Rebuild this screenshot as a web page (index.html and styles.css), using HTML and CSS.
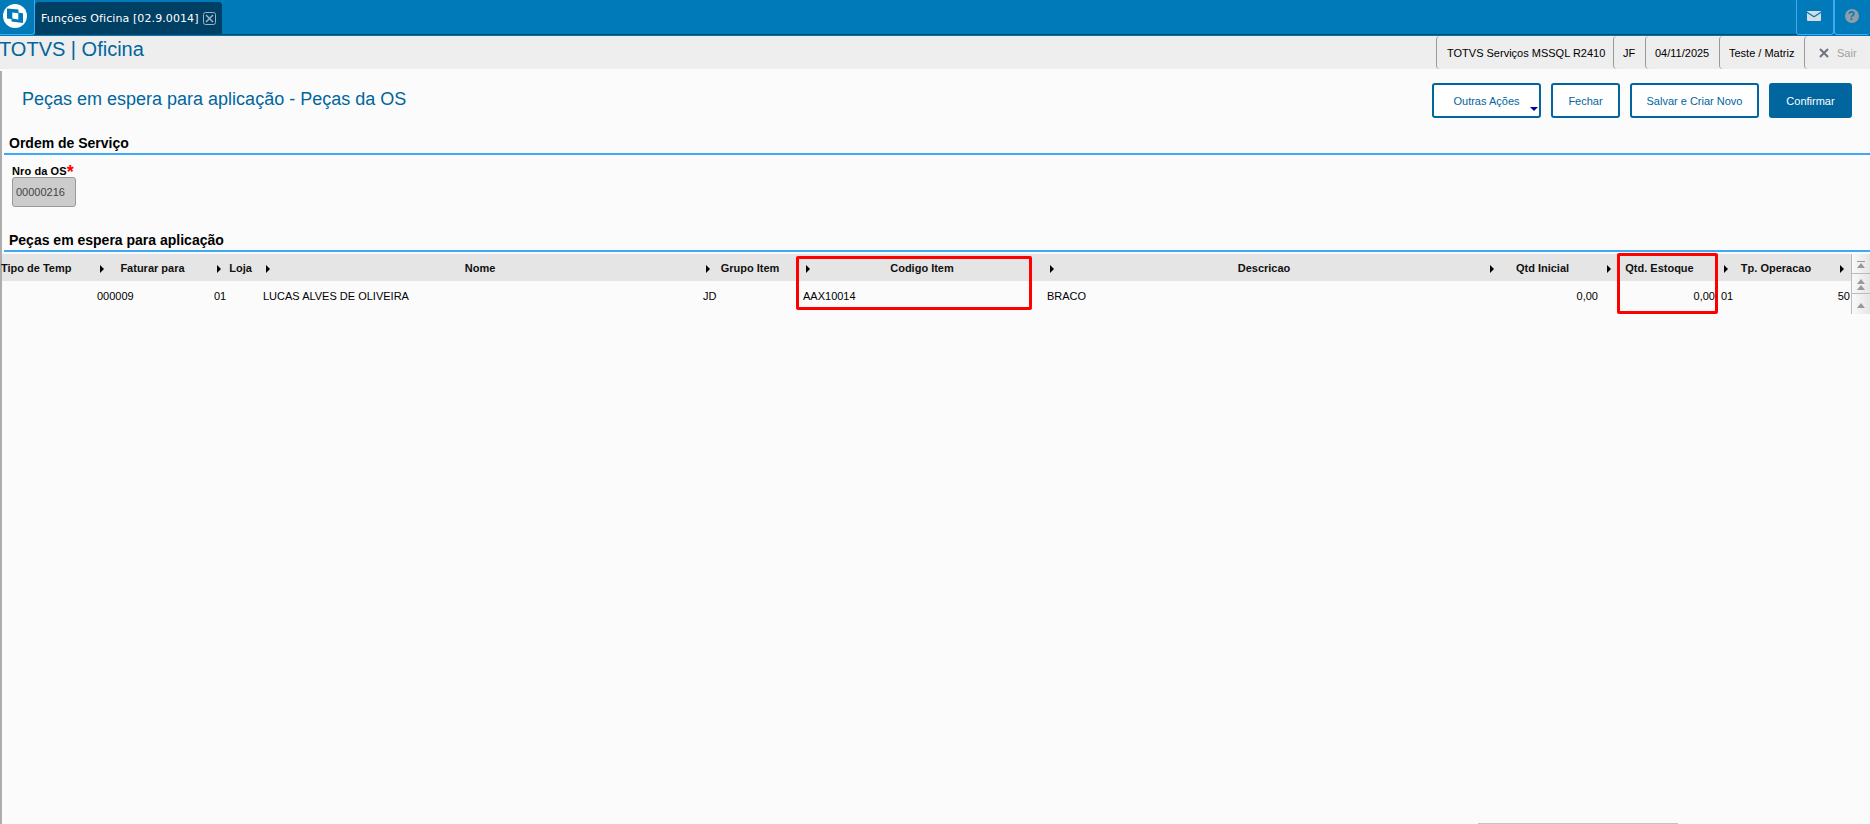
FILE: index.html
```html
<!DOCTYPE html>
<html lang="pt-BR">
<head>
  <meta charset="UTF-8">
  <meta name="viewport" content="width=device-width, initial-scale=1.0">
  <title>TOTVS | Oficina</title>
  <link rel="stylesheet" href="styles.css">
</head>
<body>
  <header class="topbar">
    <div class="logo">
      <svg width="24" height="24" viewBox="0 0 24 24">
        <circle cx="12" cy="12" r="12" fill="#fff"/>
        <path d="M4 4.600L15.500 5.600V16L4 14.500z" fill="#007ab8"/>
        <path d="M8.500 7.800L20 9.200V19L8.500 17.500z" fill="#007ab8"/>
        <path d="M9.300 8.600L15.300 9.300V15.400L9.300 14.600z" fill="#fff"/>
      </svg>
    </div>
    <div class="tab">
      <span class="tab-title">Funções Oficina [02.9.0014]</span>
      <svg width="13" height="13" viewBox="0 0 13 13" fill="none" stroke="#9bb3c2">
        <rect x=".5" y=".5" width="12" height="12" rx="2"/>
        <path d="M3 3l7 7M10 3l-7 7" stroke-width="1.500"/>
      </svg>
    </div>
    <div class="top-icons">
      <div class="top-icon mail">
        <svg width="14" height="10" viewBox="0 0 14 10">
          <rect width="14" height="10" rx="1" fill="#d3dde3"/>
          <path d="M0 1.200l7 4.600 7-4.600" fill="none" stroke="#007ab8" stroke-width="1.200"/>
        </svg>
      </div>
      <div class="top-icon help"><span>?</span></div>
    </div>
  </header>

  <div class="subbar">
    <div class="app-name">TOTVS | Oficina</div>
    <div class="info">
      <div class="info-item env">TOTVS Serviços MSSQL R2410</div>
      <div class="info-item module">JF</div>
      <div class="info-item date">04/11/2025</div>
      <div class="info-item branch">Teste / Matriz</div>
      <div class="info-item exit">
        <svg width="10" height="10" viewBox="0 0 10 10"><path d="M1 1l8 8M9 1l-8 8" stroke="#6b7280" stroke-width="2"/></svg>
        <span>Sair</span>
      </div>
    </div>
  </div>

  <main class="content">
    <div class="page-head">
      <h1>Peças em espera para aplicação - Peças da OS</h1>
      <div class="actions">
        <button class="btn more">Outras Ações</button>
        <button class="btn close">Fechar</button>
        <button class="btn save">Salvar e Criar Novo</button>
        <button class="btn confirm">Confirmar</button>
      </div>
    </div>

    <h2>Ordem de Serviço</h2>
    <div class="field">
      <label for="os">Nro da OS<span class="required">*</span></label>
      <input type="text" id="os" value="00000216" disabled>
    </div>

    <h2 class="items-title">Peças em espera para aplicação</h2>
    <div class="grid">
      <div class="grid-table">
        <div class="row head">
          <div class="first"><span>Tipo de Temp</span></div>
          <div><span>Faturar para</span></div>
          <div class="store"><span>Loja</span></div>
          <div><span>Nome</span></div>
          <div><span>Grupo Item</span></div>
          <div><span>Codigo Item</span></div>
          <div><span>Descricao</span></div>
          <div><span>Qtd Inicial</span></div>
          <div><span>Qtd. Estoque</span></div>
          <div><span>Tp. Operacao</span></div>
          <div></div>
        </div>
        <div class="row">
          <div></div>
          <div>000009</div>
          <div>01</div>
          <div>LUCAS ALVES DE OLIVEIRA</div>
          <div>JD</div>
          <div>AAX10014</div>
          <div>BRACO</div>
          <div class="num">0,00</div>
          <div class="num">0,00</div>
          <div>01</div>
          <div class="num last">50</div>
        </div>
        <div class="mark mark-code"></div>
        <div class="mark mark-stock"></div>
      </div>
      <div class="scroller">
        <div class="scroll-btn"><svg width="8" height="7" viewBox="0 0 8 7"><path d="M0 0h8v1H0zM4 2l4 5H0z"/></svg></div>
        <div class="scroll-btn"><svg width="8" height="11" viewBox="0 0 8 11"><path d="M4 0l4 5H0zM4 6l4 5H0z"/></svg></div>
        <div class="scroll-btn"><svg width="8" height="5" viewBox="0 0 8 5"><path d="M4 0l4 5H0z"/></svg></div>
      </div>
    </div>
    <div class="bottom-panel"></div>
  </main>
</body>
</html>
```
FILE: styles.css
```css
* {
  box-sizing: border-box;
}
body {
  margin: 0;
  height: 824px;
  display: flex;
  flex-direction: column;
  overflow: hidden;
  background-color: #fbfbfb;
  color: #000;
  font-family: "Liberation Sans", Arial, sans-serif;
  font-size: 11px;
}
svg {
  display: block;
  flex: none;
}
.topbar {
  display: flex;
  height: 36px;
  flex: none;
  background: linear-gradient(#007ab8 34px, #004466 34px, #004466 35px, #0078b5 35px);
}
.logo {
  width: 35px;
  height: 35px;
  padding: 4px 0 0 3px;
  border: solid #3fa9f5;
  border-width: 0 1px 1px 0;
  border-radius: 0 0 3px 0;
  background-color: #007ab8;
}
.tab {
  display: flex;
  align-items: center;
  justify-content: space-between;
  width: 187px;
  height: 32px;
  margin-top: 2px;
  padding: 0 6px;
  background-color: #004064;
  border-radius: 4px 4px 0 0;
  color: #fff;
  font-family: "DejaVu Sans", Verdana, sans-serif;
  white-space: nowrap;
}
.tab-title {
  padding-top: 1px;
  font-size: 11px;
  letter-spacing: 0.1px;
}
.top-icons {
  display: flex;
  margin-left: auto;
}
.top-icon {
  display: flex;
  align-items: center;
  justify-content: center;
  width: 38px;
  height: 35px;
  padding: 0 2px 2px 0;
  border: 1px solid #3fa9f5;
  border-top: none;
  border-radius: 0 0 3px 3px;
  background-color: #007ab8;
}
.top-icon.help {
  width: 36px;
  border-right: none;
}
.help span {
  width: 14px;
  height: 14px;
  border-radius: 50%;
  background-color: #8e9da7;
  color: #007ab8;
  font-size: 12px;
  font-weight: bold;
  line-height: 14px;
  text-align: center;
}
.subbar {
  display: flex;
  justify-content: space-between;
  height: 33px;
  flex: none;
  background-color: #eee;
}
.app-name {
  margin-left: -1px;
  color: #00669d;
  font-size: 20px;
  line-height: 26px;
}
.info {
  display: flex;
}
.info-item {
  display: flex;
  align-items: center;
  padding-left: 10px;
  border-left: 1px solid #999;
  border-radius: 4px 0 0 4px;
  white-space: nowrap;
}
.env {
  width: 177px;
}
.module {
  width: 32px;
  padding-left: 9px;
}
.date {
  width: 74px;
  padding-left: 9px;
}
.branch {
  width: 85px;
  padding-left: 9px;
}
.exit {
  width: 66px;
  padding-left: 14px;
  gap: 8px;
  color: #a0a0a0;
}
.content {
  flex: 1;
  margin-top: 2px;
  border-left: 2px solid #adadad;
  display: flex;
  flex-direction: column;
}
.page-head {
  display: flex;
  justify-content: space-between;
  height: 63px;
  padding: 12px 18px 0 20px;
}
h1 {
  margin: 0;
  color: #00669d;
  font-size: 18px;
  font-weight: normal;
  line-height: 32px;
}
.actions {
  display: flex;
  gap: 10px;
}
.btn {
  position: relative;
  height: 35px;
  padding: 0;
  border: 2px solid #00669d;
  border-radius: 3px;
  background-color: #fff;
  color: #00669d;
  font-family: inherit;
  font-size: 11px;
  white-space: nowrap;
}
.more {
  width: 109px;
}
.more::after {
  content: "";
  position: absolute;
  right: 1px;
  bottom: 5px;
  border: solid transparent;
  border-width: 4px 4px 0;
  border-top-color: #0000a0;
}
.close {
  width: 69px;
}
.save {
  width: 129px;
}
.confirm {
  width: 83px;
  background-color: #00669d;
  color: #fff;
}
h2 {
  height: 21px;
  margin: 0 0 0 2px;
  padding-left: 5px;
  border-bottom: 2px solid #3fa9f5;
  font-size: 14px;
  line-height: 18px;
}
.field {
  display: flex;
  flex-direction: column;
  height: 76px;
  padding: 9px 0 0 10px;
}
.field label {
  height: 13px;
  font-weight: bold;
  letter-spacing: 0.1px;
  line-height: 14px;
}
.required {
  color: #f00;
  font-size: 18px;
  line-height: 10px;
  vertical-align: -3px;
}
.field input {
  width: 64px;
  height: 30px;
  padding: 0 3px;
  border: 1px solid #999;
  border-radius: 3px;
  background-color: #ccc;
  color: #444;
  font-family: inherit;
  font-size: 11px;
}
.grid {
  display: flex;
  margin-top: 2px;
}
.grid-table {
  position: relative;
  width: 1849px;
}
.row {
  display: grid;
  grid-template-columns: 93px 117px 49px 440px 100px 244px 440px 117px 117px 116px 16px;
  height: 30px;
  line-height: 30px;
  white-space: nowrap;
}
.row > div {
  padding-left: 2px;
}
.row .num {
  padding: 0 4px 0 0;
  text-align: right;
}
.row .last {
  padding-right: 1px;
}
.head {
  height: 27px;
  background-color: #e5e5e5;
  color: #111;
  font-weight: bold;
  line-height: 28px;
}
.head > div {
  position: relative;
  padding: 0 2px 0 0;
  text-align: center;
}
.head > div::before {
  content: "";
  position: absolute;
  left: 5px;
  top: 11px;
  border: solid transparent;
  border-width: 4px 0 4px 4px;
  border-left-color: #000;
}
.head > .first {
  text-align: left;
}
.head > .first::before {
  display: none;
}
.first span {
  margin-left: -1px;
}
.head > .store {
  padding: 0 0 0 8px;
}
.mark {
  position: absolute;
  border: 3px solid #f00;
  border-radius: 2px;
}
.mark-code {
  left: 794px;
  top: 2px;
  width: 236px;
  height: 54px;
}
.mark-stock {
  left: 1615px;
  top: -1px;
  width: 101px;
  height: 61px;
}
.scroller {
  width: 19px;
  height: 60px;
  border-left: 1px solid #bbb;
}
.scroll-btn {
  display: flex;
  align-items: center;
  justify-content: center;
  height: 20px;
  padding-top: 2px;
  border-bottom: 1px solid #bbb;
  background: linear-gradient(90deg, #fafafa, #e5e5e5);
}
.scroll-btn:last-child {
  border-bottom: none;
}
.scroll-btn path {
  fill: #999;
}
.bottom-panel {
  width: 200px;
  height: 1px;
  margin: auto 0 0 1476px;
  background-color: #c4c4c4;
}
```
